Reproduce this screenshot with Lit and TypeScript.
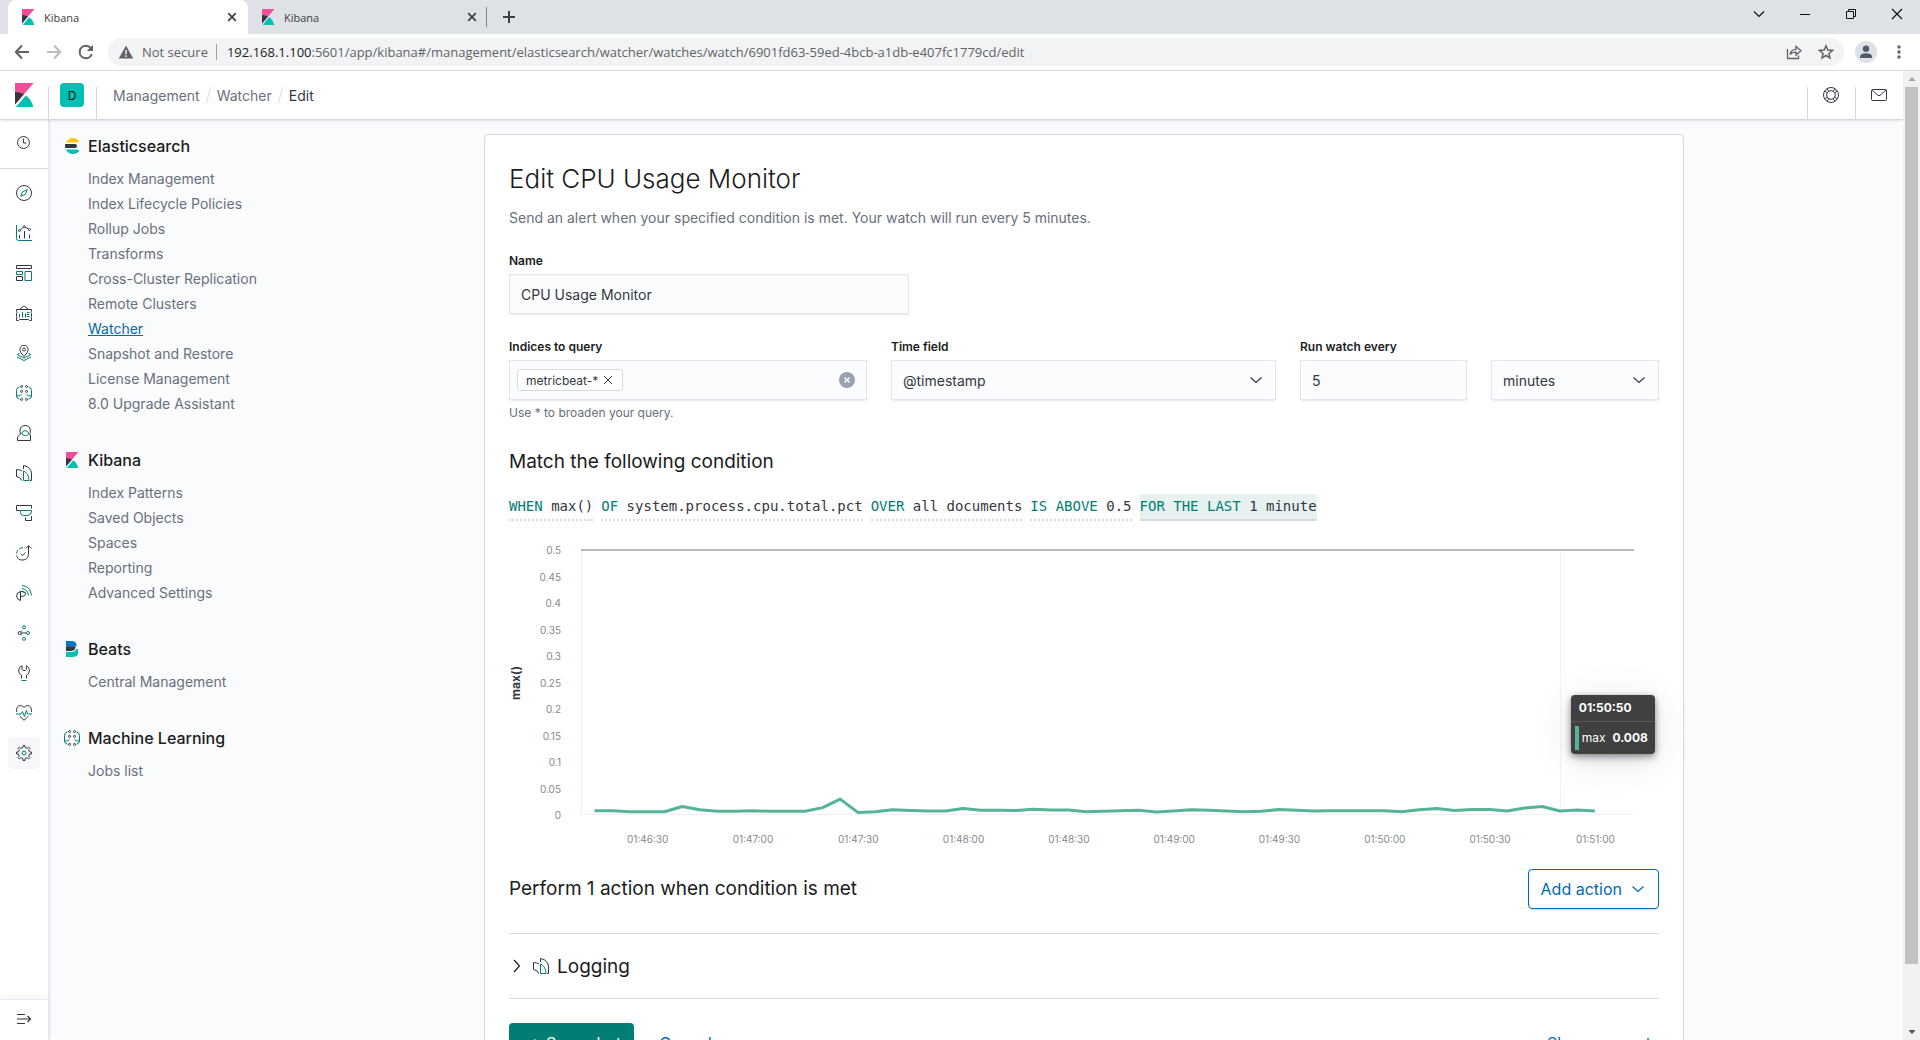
import { LitElement, html, svg, css, TemplateResult } from "lit";
import { customElement, property } from "lit/decorators.js";

const DARK = "#343741";
const TEAL = "#017D73";

/* Outline of a cog wheel centred in a 16 unit box. */
function cogPath(teeth: number, outer: number, inner: number): string {
  const step = (Math.PI * 2) / teeth;
  const at = (r: number, a: number) => `${(8 + r * Math.sin(a)).toFixed(2)} ${(8 - r * Math.cos(a)).toFixed(2)}`;
  let d = "";
  for (let i = 0; i < teeth; i++) {
    const a = i * step;
    d += `${i ? "L" : "M"}${at(inner, a - step * 0.25)}L${at(outer, a - step * 0.17)}L${at(outer, a + step * 0.17)}L${at(inner, a + step * 0.25)}`;
  }
  return d + "Z";
}

const dark = (d: string) => svg`<path d=${d} fill="none" stroke=${DARK} />`;
const teal = (d: string) => svg`<path d=${d} fill="none" stroke=${TEAL} />`;
const line = (d: string, w = 1) => svg`<path d=${d} fill="none" stroke="currentColor" stroke-width=${w} />`;
const ring = (x: number, y: number, r: number, c = DARK) =>
  svg`<circle cx=${x} cy=${y} r=${r} fill="none" stroke=${c} />`;

const kibanaMark = svg`<g transform="scale(.5)">
  <path fill="#F04E98" d="M4 0v28.789L28.935.017z"/>
  <path fill="#343741" d="M4 12v16.789l11.906-13.738A24.721 24.721 0 004 12"/>
  <path fill="#00BFB3" d="M18.479 16.664L6.268 30.754l-1.073 1.237h23.191c-1.252-6.292-4.883-11.719-9.908-15.327"/></g>`;

const glyphs: Record<string, unknown> = {
  kibana: kibanaMark,
  elastic: svg`<g transform="scale(.5)">
    <path fill="#343741" d="M2 16c0 1.384.194 2.72.524 4H22a4 4 0 000-8H2.524A15.984 15.984 0 002 16"/>
    <path fill="#FEC514" d="M28.924 7.662A15.381 15.381 0 0030.48 6C27.547 2.346 23.05 0 18 0 11.679 0 6.239 3.678 3.644 9H25.51a5.039 5.039 0 003.413-1.338"/>
    <path fill="#00BFB3" d="M25.51 23H3.645C6.24 28.323 11.679 32 18 32c5.05 0 9.547-2.346 12.48-6a15.381 15.381 0 00-1.556-1.662A5.034 5.034 0 0025.51 23"/></g>`,
  beats: svg`<path fill="#07C" d="M2 0h6.2a4.4 4.4 0 014.3 5.2H2z"/>
    <path fill="#343741" d="M2 5.2h9.6A4.4 4.4 0 017.4 10H2z"/>
    <path fill="#00BFB3" d="M2 11h5.6c2.4 0 4.3-1.300 5-3.200h1.200Q15.600 15.600 9.600 16H2z"/>`,
  clock: svg`${ring(7.500, 7.500, 6)}${dark("M7.5 3.500V8H10.500")}`,
  discover: svg`${ring(8, 8, 7.5)}${teal("M11.300 4.700L9.300 9.300L4.700 11.300L6.700 6.700Z")}`,
  visualize: svg`${teal("M.5 0V13.500Q.5 15.500 2.500 15.500H16")}${dark("M3.500 10V13.500M8.500 6V13.500M13.500 9.500V13.500M4.300 4.800L7.200 2.400M9.300 2.300L12.600 4")}${ring(3.500, 5.500, 1)}${ring(8.300, 1.700, 1)}${ring(13.500, 4.500, 1)}`,
  dashboard: svg`${dark("M.5 .5H15.500V3.500H.5ZM.5 11.500H6.500V15.500H.5Z")}${teal("M.5 6.500H6.500V9.500H.5ZM9 6.500H15.500V15.500H9Z")}`,
  canvas: svg`${dark("M3.500 4.500L8 .8L12.500 4.500M.5 4.500H15.500V6.500Q14.500 7 15.500 8.500V11.500Q14.500 12 15.500 13V15.500H13.500L12.500 14.500H3.500L2.500 15.500H.5V13Q1.500 12 .5 11.500V8.500Q1.500 7 .5 6.500Z")}${teal("M3.500 9V12.500M6.500 7V12.500M9.500 8.500V12.500M11 7.500H13.500M11 9.500H13.500M11 11.500H13.500")}`,
  maps: svg`${dark("M8 11.500Q3.800 7.500 3.800 4.500A4.200 4.200 0 0112.200 4.500Q12.200 7.500 8 11.500Z")}${ring(8, 4.500, 1.500)}${teal("M3.500 8.500L1 9.500L8 13L15 9.500L12.500 8.500M1 12L8 15.500L15 12")}`,
  ml: svg`${teal("M3.500 1.800Q.5 2.500 .5 5.500V11Q.5 13.500 3.500 14.300M1 11Q3 11.500 5.500 9.500M12.500 1.800Q15.500 2.500 15.500 5.500V11Q15.500 13.500 12.500 14.300M15 11Q13 11.500 10.500 9.500")}${[1.500, 6.400, 14.400].map((y) => svg`${ring(5.600, y, 1)}${ring(10.500, y, 1)}`)}`,
  metrics: svg`${dark("M4.500 9Q3.800 7 4 5A5.200 5.200 0 0114.300 5Q14.600 7.500 13.800 9.500L14.500 11V15.500H1.500V12L5.500 8")}${teal("M5.800 9Q6 6 9.200 5.500Q12.400 6 12.800 9Q12 10.500 9.200 10.500Q6.500 10.500 5.800 9Z")}`,
  logs: svg`${dark("M5.500 15.500Q5.500 12.500 .5 11.500V4.500Q4 4.600 6 6M7.500 4V.500Q15.500 2 15.500 9V15.500H14")}${teal("M7.500 6V15.500H13Q13 8.500 7.500 6Z")}`,
  apm: svg`${dark("M4 5.500H.5V.5H15.500V3.500M9.500 12.500V15.500H15.500V11")}${teal("M4.500 5.500H15.500V7Q15 10.500 11 10.500H7.500Q4.500 10 4.500 7.500Z")}`,
  uptime: svg`${dark("M12.500 1V9.500A6 6 0 01.7 10.500M9.800 3.300L12.500 .8L15.500 3.300M4.500 8.800L6.300 10.500L9.500 7.500")}<path d="M.6 8.500A6 6 0 019 3.300" fill="none" stroke=${TEAL} stroke-dasharray="4 1.500"/>`,
  siem: svg`${dark("M4.500 6.500A4.500 4.500 0 000.600 11Q.8 14.500 4.500 15.500V6.500H6Q9.500 7 9.500 9.500Q9 11.500 4.500 11.500")}${teal("M6 3.500Q11.500 4 12.500 10.500M6 .5Q14.500 1 15.500 10.500M6.500 6Q9 6.500 10 9")}`,
  graph: svg`${ring(3.700, 8, 1.500)}${ring(8, 2.200, 1.500, TEAL)}${ring(8, 13.800, 1.500, TEAL)}${ring(12, 8, 1.500, TEAL)}${dark("M5.300 8H10M5 6.700L6 5.500M5 9.300L6 10.500")}`,
  devtools: svg`${dark("M6 .7A5.200 5.200 0 005.500 10.200V13.500M10.300 .7A5.200 5.200 0 0110.500 10.200V13.500M6 .7V4.500L7 5.500H9.300L10.300 4.500V.7")}${teal("M5.500 15.500H10.500")}`,
  monitoring: svg`${dark("M.7 7Q-.2 .8 4.500 .6Q7 .7 8 2.500Q9 .7 11.500 .6Q16.200 .8 15.300 7M3.500 11L8 15.300L12.500 11")}${teal("M0 9H5L6.500 6.500L8.500 11.500L10.500 5.500L11.500 9H16")}`,
  gear: svg`<path d=${cogPath(8, 7.500, 5.600)} fill="none" stroke=${DARK} />${ring(8, 8, 2, TEAL)}`,
  expand: svg`${line("M1 3.500H9M1 8H14.500M1 12.500H9M11.500 5L14.500 8L11.500 11", 1.200)}`,
  help: svg`${ring(8, 8, 7.5)}${ring(8, 8, 4.300)}${dark("M2 4L4.500 6M4 2L6 4.500M14 4L11.500 6M12 2L10 4.500M2 12L4.500 10M4 14L6 11.500M14 12L11.500 10M12 14L10 11.500")}`,
  mail: svg`<rect x=".5" y="2.500" width="15" height="11" rx="1" fill="none" stroke=${DARK} />${dark("M1 3L7 8.300Q8 9 9 8.300L15 3")}`,
  down: line("M2.500 5.500L8 10.500L13.500 5.500", 1.200),
  right: line("M5 2L10.500 8L5 14", 1.200),
  cross: line("M4 4L12 12M12 4L4 12"),
  clear: svg`<circle cx="8" cy="8" r="8" fill="#98A2B3"/><path d="M5.500 5.500L10.500 10.500M10.500 5.500L5.500 10.500" stroke="#fff" stroke-width="1.500"/>`,
  check: line("M2.500 8.500L6 12L13.500 4.500", 1.500),
  tabClose: line("M4.200 4.200L11.800 11.800M11.800 4.200L4.200 11.800", 1.700),
  plus: line("M8 2V14M2 8H14", 2),
  back: line("M15 8H2M8 1.500L1.800 8L8 14.500", 2),
  forward: line("M1 8H14M8 1.500L14.200 8L8 14.500", 2),
  reload: svg`${line("M13.800 10A6.200 6.200 0 118 1.800Q10.800 1.800 13 4.500", 2)}<path d="M15 .8V7H8.800Z" fill="currentColor"/>`,
  warning: svg`<path d="M8 1.500L15.200 14.500H.8Z" fill="currentColor"/><path d="M8 6V10.200M8 11.300V13" stroke="#F1F3F4" stroke-width="1.500"/>`,
  share: line("M1.500 5V14.500H12.500V11.500M4 10.500Q5 5.500 10 5.300V2.500L15 6.800L10 11V8.200Q6 8 4 10.500Z", 1.300),
  star: line("M8 1.800L9.800 6.100L14.500 6.500L10.900 9.500L12 14L8 11.500L4 14L5.100 9.500L1.500 6.500L6.200 6.100Z", 1.500),
  person: svg`<circle cx="8" cy="4.700" r="3.200" fill="#4F5B6D"/><path d="M2 14V12.500Q2.500 9.300 8 9.300Q13.500 9.300 14 12.500V14Z" fill="#4F5B6D"/>`,
  dots: svg`<circle cx="8" cy="3" r="1.700" fill="currentColor"/><circle cx="8" cy="8" r="1.700" fill="currentColor"/><circle cx="8" cy="13" r="1.700" fill="currentColor"/>`,
  winMenu: line("M3 5.500L8 10.500L13 5.500", 1.200),
  winMin: line("M3 8.500H13"),
  winMax: line("M3.500 5.500H10.500V12.500H3.500ZM5.500 5.500V3.500H12.500V10.500H10.500"),
  winClose: line("M3 3L13 13M13 3L3 13", 1.200),
  arrowUp: svg`<path d="M4.500 10L8 6L11.500 10Z" fill="#A3A3A3"/>`,
  arrowDown: svg`<path d="M4.500 6L8 10L11.500 6Z" fill="#505050"/>`,
};

function icon(name: string, size = 16): TemplateResult {
  return html`<svg class="icon" width=${size} height=${size} viewBox="0 0 16 16" aria-hidden="true">${glyphs[name]}</svg>`;
}

/* Highest CPU share per five seconds, in thousandths. */
const SAMPLES = [
  8, 8, 6, 6, 6, 16, 10, 7, 7, 8, 7, 7, 7, 14, 30, 5, 6, 10, 8.5, 7.5, 7.5, 12, 9, 9, 8.5, 11, 9.5, 9.5, 6,
  7, 8, 9, 5.5, 7.5, 10, 9, 7.5, 6, 7, 10.5, 9, 7.5, 8, 8, 8, 8, 6, 10, 12.5, 8.5, 10.5, 10.5, 7.5, 13, 16,
  7.5, 9.5, 7.5,
];
const Y_TICKS = ["0.5", "0.45", "0.4", "0.35", "0.3", "0.25", "0.2", "0.15", "0.1", "0.05", "0"];
const X_TICKS = [
  "01:46:30", "01:47:00", "01:47:30", "01:48:00", "01:48:30",
  "01:49:00", "01:49:30", "01:50:00", "01:50:30", "01:51:00",
];

@customElement("watch-chart")
export class WatchChart extends LitElement {
  @property({ attribute: false }) samples: number[] = SAMPLES;

  static styles = css`
    :host { display: block; font-family: Inter, "Liberation Sans", sans-serif; }
    .chart { display: grid; grid-template-columns: 14px 38px minmax(0, 1fr); column-gap: 0; padding: 13px 25px 0 0; }
    .name {
      writing-mode: vertical-rl; transform: rotate(180deg); align-self: center; justify-self: center;
      font-size: 12px; line-height: 14px; font-weight: 700; color: #343741;
    }
    .yaxis {
      display: flex; flex-direction: column; justify-content: space-between; text-align: right;
      margin: -6px 0; font-size: 10px; line-height: 12px; color: #848992;
    }
    .plot { position: relative; margin-left: 20px; height: 265px; }
    .lines { display: block; width: 100%; height: 100%; overflow: visible; }
    .xaxis {
      grid-column: 3; display: grid; grid-template-columns: repeat(10, minmax(0, 1fr)); text-align: center;
      margin: 0 -14px 0 34px; padding-top: 18px; font-size: 10px; line-height: 12px; color: #848992;
    }
    .tip {
      position: absolute; left: 94%; top: 145px; width: 84px; box-sizing: border-box;
      border-radius: 4px; background: #404040; color: #fff; font-size: 12px;
      box-shadow: 0 6px 12px -1px rgba(65, 78, 101, .2), 0 6px 40px rgba(0, 0, 0, .1), 0 2px 6px rgba(0, 0, 0, .4);
    }
    .tip-head { padding: 4px 8px; line-height: 18px; font-weight: 700; border-bottom: 1px solid #595959; }
    .tip-row {
      display: flex; justify-content: space-between; margin: 4px; padding: 0 3px;
      line-height: 24px; border-left: 4px solid #54B399;
    }
    .tip-row b { font-weight: 700; }
  `;

  render() {
    const x = (i: number) => 13.5 + i * 17.55;
    const points = this.samples.map((v, i) => `${x(i).toFixed(1)},${(265 - v * 0.53).toFixed(1)}`).join(" ");
    return html`
      <div class="chart">
        <div class="name">max()</div>
        <div class="yaxis">${Y_TICKS.map((t) => html`<span>${t}</span>`)}</div>
        <div class="plot">
          <svg class="lines" viewBox="0 0 1053 265" preserveAspectRatio="none" role="img" aria-label="max() over time">
            <path d="M.5 0V264.500H1053" fill="none" stroke="#EEEFF2" vector-effect="non-scaling-stroke" />
            <path d="M979.500 0V264" stroke="#F1F2F8" vector-effect="non-scaling-stroke" />
            <path d="M0 0H1053" stroke="#BABABA" stroke-width="2" vector-effect="non-scaling-stroke" />
            <polyline points=${points} fill="none" stroke="#54B399" stroke-width="3" stroke-linejoin="round" vector-effect="non-scaling-stroke" />
          </svg>
          <div class="tip">
            <div class="tip-head">01:50:50</div>
            <div class="tip-row"><span>max</span><b>0.008</b></div>
          </div>
        </div>
        <div class="xaxis">${X_TICKS.map((t) => html`<span>${t}</span>`)}</div>
      </div>
    `;
  }
}

const RAIL = [
  ["discover", "Discover"], ["visualize", "Visualize"], ["dashboard", "Dashboard"], ["canvas", "Canvas"],
  ["maps", "Maps"], ["ml", "Machine Learning"], ["metrics", "Metrics"], ["logs", "Logs"], ["apm", "APM"],
  ["uptime", "Uptime"], ["siem", "SIEM"], ["graph", "Graph"], ["devtools", "Dev Tools"],
  ["monitoring", "Stack Monitoring"], ["gear", "Management"],
];

const SECTIONS = [
  { icon: "elastic", title: "Elasticsearch", items: ["Index Management", "Index Lifecycle Policies", "Rollup Jobs", "Transforms", "Cross-Cluster Replication", "Remote Clusters", "Watcher", "Snapshot and Restore", "License Management", "8.0 Upgrade Assistant"] },
  { icon: "kibana", title: "Kibana", items: ["Index Patterns", "Saved Objects", "Spaces", "Reporting", "Advanced Settings"] },
  { icon: "beats", title: "Beats", items: ["Central Management"] },
  { icon: "ml", title: "Machine Learning", items: ["Jobs list"] },
];

const EXPRESSIONS = [
  ["WHEN", "max()"], ["OF", "system.process.cpu.total.pct"], ["OVER", "all documents"],
  ["IS ABOVE", "0.5"], ["FOR THE LAST", "1 minute"],
];

@customElement("app-root")
export class AppRoot extends LitElement {
  static styles = css`
    :host {
      display: flex; flex-direction: column; height: 100vh; overflow: hidden; background: #fff;
      font-family: Inter, "Liberation Sans", sans-serif; font-size: 14px; color: #343741;
    }
    * { box-sizing: border-box; }
    button, input, select { font: inherit; color: inherit; margin: 0; }
    button { border: 0; background: none; padding: 0; cursor: pointer; }
    a { color: inherit; text-decoration: none; }
    h1, h2, h3, p, ul { margin: 0; padding: 0; font-weight: 400; }
    ul { list-style: none; }
    .icon { display: block; flex: none; }

    .tabs { display: flex; align-items: stretch; height: 34px; flex: none; padding-left: 8px; background: #DEE1E6; font-family: "Open Sans", "Noto Sans", sans-serif; font-size: 11px; color: #3C4043; }
    .tab { display: flex; align-items: center; width: 240px; padding: 0 8px 0 12px; gap: 8px; }
    .tab.on { background: #fff; border-radius: 8px 8px 0 0; }
    .tab span { flex: 1; }
    .tab-end { align-self: center; width: 1px; height: 20px; background: #808387; margin: 0 14px 0 -2px; }
    .window { display: flex; margin-left: auto; padding-right: 15px; gap: 30px; color: #111; height: 28px; align-items: center; }
    .toolbar { display: flex; align-items: center; height: 37px; flex: none; padding: 0 13px 0 14px; gap: 16px; border-bottom: 1px solid #D9DADC; color: #5F6368; }
    .off { color: #BABCBE; }
    .address { display: flex; align-items: center; flex: 1; height: 28px; margin-left: -2px; padding: 0 10px; gap: 8px; border-radius: 14px; background: #F1F3F4; font-family: "Open Sans", "Noto Sans", sans-serif; font-size: 13px; white-space: nowrap; }
    .address .split { width: 1px; height: 16px; background: #9AA0A6; }
    .address .url { flex: 1; min-width: 0; overflow: hidden; margin-left: 2px; color: #5F6368; }
    .address .host { color: #202124; }
    .address button + button { margin-left: 8px; }
    .avatar { display: grid; place-items: center; width: 22px; height: 22px; margin: 0 -2px 0 -5px; border-radius: 50%; background: #DEE1E6; }

    .view { display: flex; flex: 1; min-height: 0; }
    .app { display: flex; flex-direction: column; flex: 1; min-width: 0; }
    .scroll { display: flex; flex-direction: column; justify-content: space-between; align-items: center; width: 17px; background: #F1F1F1; }
    .scroll .thumb { flex: 1; width: 13px; margin-bottom: 60px; background: #C1C1C1; }

    .header { position: relative; z-index: 2; display: flex; align-items: center; flex: none; height: 49px; margin-bottom: -1px; background: #fff; border-bottom: 1px solid #D3DAE6; box-shadow: 0 2px 2px -1px rgba(152, 162, 179, .3); }
    .cell { display: grid; place-items: center; width: 48px; height: 48px; }
    .rule { width: 1px; height: 32px; margin-right: -1px; align-self: flex-end; background: #D3DAE6; }
    .space { display: grid; place-items: center; width: 24px; height: 24px; border-radius: 4px; background: #00BFB3; color: #111; font-size: 12px; }
    .crumbs { display: flex; align-items: center; flex: 1; gap: 8px; margin-left: 17px; color: #69707D; }
    .crumbs i { width: 1px; height: 16px; background: #D3DAE6; transform: rotate(15deg); }
    .crumbs b { font-weight: 400; color: #343741; }

    .body { display: flex; flex: 1; min-height: 0; }
    .rail { position: relative; z-index: 1; display: flex; flex-direction: column; flex: none; width: 49px; border-right: 1px solid #E6E9F1; background: #fff; box-shadow: 1px 0 2px rgba(152, 162, 179, .2); }
    .rail-top { padding: 8px 8px 9px; border-bottom: 1px solid #D3DAE6; }
    .rail-list { display: flex; flex-direction: column; flex: 1; gap: 8px; padding: 8px; min-height: 0; }
    .rail a, .rail button { display: grid; place-items: center; flex: none; width: 32px; height: 32px; border-radius: 4px; }
    .rail a.on { background: #F5F7FA; }
    .rail-foot { padding: 3px 8px 5px; border-top: 1px solid #E6E9F1; box-shadow: 0 -2px 8px rgba(0, 0, 0, .05); }

    .page { display: flex; align-items: flex-start; flex: 1; min-width: 0; gap: 24px; padding: 15px 16px 0 15px; background: #FAFBFD; overflow: hidden; }
    .side { display: flex; flex-direction: column; flex: none; width: 193px; gap: 32px; }
    .side h2 { display: flex; align-items: center; gap: 8px; margin-bottom: 8px; font-size: 16px; line-height: 24px; font-weight: 500; color: #1A1C21; }
    .side ul { padding-left: 24px; line-height: 25px; color: #69707D; }
    .side a.on { color: #006BB4; text-decoration: underline; }

    .content { flex: 1; min-width: 0; }
    .panel { max-width: 1200px; margin: 0 auto; padding: 24px; background: #fff; border: 1px solid #D3DAE6; border-radius: 4px; box-shadow: 0 2px 2px -1px rgba(152, 162, 179, .3); }
    .title { font-size: 26px; line-height: 40px; font-weight: 300; color: #1A1C21; }
    .lead { margin: 8px 0 24px; line-height: 21px; color: #69707D; }
    .field { display: flex; flex-direction: column; min-width: 0; }
    .field label { height: 18px; margin-bottom: 4px; font-size: 12px; line-height: 18px; font-weight: 600; color: #1A1C21; }
    .control { width: 100%; height: 40px; padding: 0 11px; border: 1px solid #E2E5EF; border-radius: 0; background: #FBFCFD; box-shadow: 0 2px 2px -1px rgba(152, 162, 179, .25); appearance: none; outline: none; }
    .name { max-width: 400px; margin-bottom: 24px; }
    .row { display: grid; grid-template-columns: 358fr 385fr 167fr 168fr; gap: 24px; align-items: start; }
    .pick { display: grid; align-items: center; }
    .pick > * { grid-area: 1 / 1; }
    .pick .icon { justify-self: end; margin-right: 12px; pointer-events: none; }
    .combo { display: flex; align-items: center; gap: 8px; padding: 0 11px 0 7px; }
    .combo input { flex: 1; min-width: 0; border: 0; background: none; outline: none; }
    .pill { display: flex; align-items: center; gap: 2px; height: 22px; padding: 0 6px 0 8px; border: 1px solid #D3DAE6; border-radius: 2px; background: #fff; font-size: 12px; }
    .hint { padding-top: 4px; font-size: 12px; line-height: 18px; color: #69707D; }
    .sub { font-size: 19px; line-height: 32px; color: #1A1C21; }
    .match { margin: 24px 0 16px; }
    .exprs { display: flex; flex-wrap: wrap; gap: 8px; margin-bottom: 16px; font-family: "DejaVu Sans Mono", "Liberation Mono", monospace; }
    .expr { line-height: 25px; border-bottom: 2px dotted #D3DAE6; white-space: pre; }
    .expr.on { background: #E6F1F0; border-bottom-style: solid; }
    .expr span { color: #017D73; }
    .actions { display: flex; align-items: center; justify-content: space-between; margin: 24px 0; }
    .add { display: flex; align-items: center; gap: 8px; height: 40px; padding: 0 12px; border: 1px solid #006BB4; border-radius: 4px; font-size: 16px; color: #006BB4; box-shadow: 0 2px 2px -1px rgba(54, 97, 126, .3); }
    .fold { border: solid #D3DAE6; border-width: 1px 0; }
    .fold button { display: flex; align-items: center; width: 100%; height: 64px; gap: 8px; font-size: 19px; color: #1A1C21; }
    .buttons { display: flex; align-items: center; height: 40px; margin-top: 24px; font-size: 16px; color: #006BB4; }
    .buttons .save { display: flex; align-items: center; gap: 8px; height: 40px; padding: 0 13px; border-radius: 4px; background: #017D73; color: #fff; }
    .buttons .cancel { margin: 0 auto 0 25px; }
    .buttons .show { margin-right: 8px; }
  `;

  private tab(active: boolean) {
    return html`<div class="tab ${active ? "on" : ""}">${icon("kibana")}<span>Kibana</span><button aria-label="Close tab">${icon("tabClose")}</button></div>`;
  }

  render() {
    return html`
      <div class="tabs">
        ${this.tab(true)}${this.tab(false)}<i class="tab-end"></i>
        <button aria-label="New tab">${icon("plus")}</button>
        <div class="window">
          <button aria-label="Search tabs">${icon("winMenu")}</button>
          <button aria-label="Minimize">${icon("winMin")}</button>
          <button aria-label="Restore">${icon("winMax")}</button>
          <button aria-label="Close">${icon("winClose")}</button>
        </div>
      </div>
      <div class="toolbar">
        <button aria-label="Back">${icon("back")}</button>
        <button class="off" aria-label="Forward">${icon("forward")}</button>
        <button aria-label="Reload">${icon("reload")}</button>
        <div class="address">
          ${icon("warning")}<span>Not secure</span><i class="split"></i>
          <div class="url" role="textbox" contenteditable="true" aria-label="Address"><span class="host">192.168.1.100</span>:5601/app/kibana#/management/elasticsearch/watcher/watches/watch/6901fd63-59ed-4bcb-a1db-e407fc1779cd/edit</div>
          <button aria-label="Share">${icon("share")}</button>
          <button aria-label="Bookmark">${icon("star")}</button>
        </div>
        <button class="avatar" aria-label="Profile">${icon("person")}</button>
        <button aria-label="Menu">${icon("dots")}</button>
      </div>
      <div class="view">
        <div class="app">
          <header class="header">
            <a class="cell" href="#home" aria-label="Home">${icon("kibana", 24)}</a><i class="rule"></i>
            <button class="cell" aria-label="Space"><span class="space">D</span></button><i class="rule"></i>
            <nav class="crumbs" aria-label="Breadcrumbs">
              <a href="#management">Management</a><i></i><a href="#watcher">Watcher</a><i></i><b>Edit</b>
            </nav>
            <i class="rule"></i><button class="cell" aria-label="Help">${icon("help")}</button>
            <i class="rule"></i><button class="cell" aria-label="News">${icon("mail")}</button>
          </header>
          <div class="body">
            <nav class="rail" aria-label="Applications">
              <div class="rail-top"><a href="#recent" aria-label="Recently viewed">${icon("clock")}</a></div>
              <div class="rail-list">
                ${RAIL.map(([g, label]) => html`<a class=${g === "gear" ? "on" : ""} href="#${g}" aria-label=${label}>${icon(g)}</a>`)}
              </div>
              <div class="rail-foot"><button aria-label="Expand navigation">${icon("expand")}</button></div>
            </nav>
            <main class="page">
              <nav class="side" aria-label="Management">
                ${SECTIONS.map((s) => html`<section>
                  <h2>${icon(s.icon)}${s.title}</h2>
                  <ul>${s.items.map((t) => html`<li><a class=${t === "Watcher" ? "on" : ""} href="#management">${t}</a></li>`)}</ul>
                </section>`)}
              </nav>
              <div class="content">
                <section class="panel">
                  <h1 class="title">Edit CPU Usage Monitor</h1>
                  <p class="lead">Send an alert when your specified condition is met. Your watch will run every 5 minutes.</p>
                  <div class="field name">
                    <label for="name">Name</label>
                    <input class="control" id="name" type="text" .value=${"CPU Usage Monitor"} />
                  </div>
                  <div class="row">
                    <div class="field">
                      <label for="indices">Indices to query</label>
                      <div class="control combo">
                        <span class="pill">metricbeat-*<button aria-label="Remove metricbeat-*">${icon("cross")}</button></span>
                        <input id="indices" type="text" />
                        <button aria-label="Clear">${icon("clear")}</button>
                      </div>
                      <p class="hint">Use * to broaden your query.</p>
                    </div>
                    <div class="field">
                      <label for="time">Time field</label>
                      <div class="pick"><select class="control" id="time"><option>@timestamp</option></select>${icon("down")}</div>
                    </div>
                    <div class="field">
                      <label for="every">Run watch every</label>
                      <input class="control" id="every" type="text" inputmode="numeric" .value=${"5"} />
                    </div>
                    <div class="field">
                      <label for="unit" aria-label="Unit"></label>
                      <div class="pick"><select class="control" id="unit"><option>minutes</option></select>${icon("down")}</div>
                    </div>
                  </div>
                  <h2 class="sub match">Match the following condition</h2>
                  <div class="exprs">
                    ${EXPRESSIONS.map(([k, v], i) => html`<button class="expr ${i === 4 ? "on" : ""}"><span>${k}</span> ${v}</button>`)}
                  </div>
                  <watch-chart></watch-chart>
                  <div class="actions">
                    <h2 class="sub">Perform 1 action when condition is met</h2>
                    <button class="add">Add action${icon("down")}</button>
                  </div>
                  <div class="fold"><button>${icon("right")}${icon("logs")}Logging</button></div>
                  <div class="buttons">
                    <button class="save">${icon("check")}Save alert</button>
                    <button class="cancel">Cancel</button>
                    <button class="show">Show request</button>
                  </div>
                </section>
              </div>
            </main>
          </div>
        </div>
        <div class="scroll" aria-hidden="true">${icon("arrowUp")}<div class="thumb"></div>${icon("arrowDown")}</div>
      </div>
    `;
  }
}
